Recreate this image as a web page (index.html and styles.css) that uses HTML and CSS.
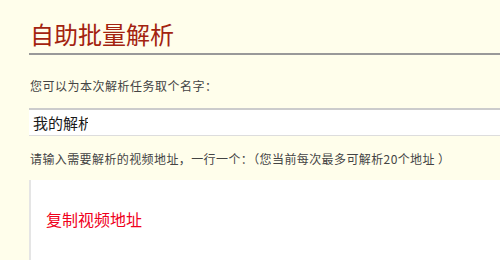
FILE: index.html
```html
<!DOCTYPE html>
<html lang="zh-CN">
<head>
  <meta charset="UTF-8" />
  <title>自助批量解析</title>
  <link rel="stylesheet" href="styles.css">
</head>
<body>
  <div class="page">
    <h1 class="title">自助批量解析</h1>

    <label class="field-label" for="task_name">您可以为本次解析任务取个名字：</label>
    <div class="name-box">
      <span class="name-value" id="task_name">我的解析</span>
    </div>

    <label class="field-label urls-label">请输入需要解析的视频地址，一行一个：（您当前每次最多可解析20个地址 ）</label>
    <div class="urls-box">
      <p class="urls-hint">复制视频地址</p>
    </div>
  </div>
</body>
</html>
```

FILE: styles.css
```css
html, body {
  margin: 0;
  padding: 0;
  height: 100%;
  overflow: hidden;
  background-color: #fffeeb;
}
.page {
  padding: 0 0 0 29px;
  font-family: "Noto Sans CJK SC", "Noto Sans", sans-serif;
  color: #444;
}
.title {
  margin: 0;
  padding: 17px 0 0 1px;
  height: 36px;
  font-size: 24px;
  font-weight: normal;
  line-height: 34px;
  color: #a3230f;
  border-bottom: 2px solid #999;
}
.field-label {
  display: block;
  margin: 22px 0 0 1px;
  font-size: 12px;
  line-height: 17px;
  letter-spacing: 0.5px;
  color: #444;
}
.name-box {
  margin-top: 14px;
  height: 25px;
  background: #fff;
  border-top: 2px solid #ccc;
  border-bottom: 1px solid #ddd;
  padding-left: 4px;
}
.name-value {
  display: block;
  width: 55px;
  overflow: hidden;
  white-space: nowrap;
  font-size: 15px;
  line-height: 25px;
  color: #1a1a1a;
}
.urls-label {
  margin-top: 14px;
  letter-spacing: 0.4px;
}
.urls-box {
  margin-top: 13px;
  height: 200px;
  background: #fff;
  border-left: 2px solid #e5e5e5;
  padding: 28px 0 0 15px;
}
.urls-hint {
  margin: 0;
  font-size: 16px;
  line-height: 22px;
  color: #f0001c;
}
```
